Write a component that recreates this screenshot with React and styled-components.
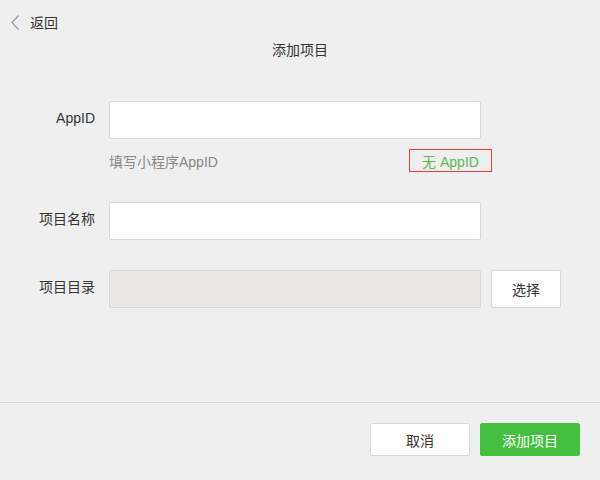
import React from "react";
import styled, { createGlobalStyle } from "styled-components";

const GlobalStyle = createGlobalStyle`
  html, body {
    margin: 0;
    padding: 0;
    background: #efefef;
  }
  body {
    font-family: "Liberation Sans", "Noto Sans CJK SC", sans-serif;
    font-size: 14px;
    color: #333;
  }
`;

const Page = styled.div`
  width: 600px;
  height: 480px;
  display: flex;
  flex-direction: column;
  background: #efefef;
`;

const Header = styled.div`
  padding: 13px 0 0 11px;
  height: 88px;
  box-sizing: border-box;
`;

const BackLink = styled.a`
  display: flex;
  align-items: center;
  gap: 11px;
  height: 18px;
  color: #333;
  font-size: 14px;
  cursor: pointer;
`;

const Title = styled.div`
  margin: 10px 0 0 -11px;
  text-align: center;
  font-size: 14px;
  color: #333;
  line-height: 18px;
`;

const Form = styled.div`
  flex: 1;
  display: flex;
  flex-direction: column;
`;

const Row = styled.div`
  display: flex;
  align-items: flex-start;
  margin-top: ${(p) => p.$top || 0}px;
`;

const Label = styled.label`
  width: 95px;
  margin-right: 14px;
  text-align: right;
  line-height: 34px;
  font-size: 14px;
  color: #333;
`;

const Input = styled.div`
  width: 372px;
  height: 38px;
  box-sizing: border-box;
  border: 1px solid #d8d8d8;
  border-radius: 2px;
  background: ${(p) => (p.$disabled ? "#e9e8e2" : "#fff")};
`;

const Hint = styled.div`
  margin: 10px 0 0 109px;
  width: 383px;
  display: flex;
  justify-content: space-between;
  align-items: center;
`;

const HintText = styled.span`
  color: #888;
  font-size: 14px;
`;

const NoAppId = styled.span`
  width: 83px;
  height: 23px;
  box-sizing: border-box;
  border: none;
  box-shadow: inset 0 0 0 1px #f03c3c;
  display: flex;
  align-items: center;
  justify-content: center;
  color: #59b84a;
  font-size: 14px;
  cursor: pointer;
`;

const Button = styled.button`
  width: ${(p) => p.$width || 100}px;
  height: ${(p) => p.$height || 33}px;
  box-sizing: border-box;
  border: 1px solid ${(p) => (p.$primary ? "#44c03f" : "#d8d8d8")};
  border-radius: 2px;
  background: ${(p) => (p.$primary ? "#44c03f" : "#fff")};
  color: ${(p) => (p.$primary ? "#fff" : "#333")};
  font-family: inherit;
  font-size: 14px;
  padding: 0;
  margin-left: ${(p) => p.$gap || 0}px;
  cursor: pointer;
`;

const Footer = styled.div`
  border-top: 1px solid #d9d9d9;
  height: 78px;
  box-sizing: border-box;
  padding: 20px 20px 0 0;
  display: flex;
  justify-content: flex-end;
  align-items: flex-start;
  gap: 10px;
`;

const Chevron = () => (
  <svg width="8" height="15" viewBox="0 0 8 15">
    <polyline points="7.5,0.5 1,7.5 7.5,14.5" fill="none" stroke="#9a9a9a" strokeWidth="1.2" />
  </svg>
);

const App = () => {
  return (
    <Page>
      <GlobalStyle />
      <Header>
        <BackLink>
          <Chevron />
          返回
        </BackLink>
        <Title>添加项目</Title>
      </Header>
      <Form>
        <Row $top={13}>
          <Label>AppID</Label>
          <Input />
        </Row>
        <Hint>
          <HintText>填写小程序AppID</HintText>
          <NoAppId>无 AppID</NoAppId>
        </Hint>
        <Row $top={30}>
          <Label>项目名称</Label>
          <Input />
        </Row>
        <Row $top={30}>
          <Label>项目目录</Label>
          <Input $disabled />
          <Button $width={70} $height={38} $gap={10}>
            选择
          </Button>
        </Row>
      </Form>
      <Footer>
        <Button>取消</Button>
        <Button $primary>添加项目</Button>
      </Footer>
    </Page>
  );
};

export default App;
